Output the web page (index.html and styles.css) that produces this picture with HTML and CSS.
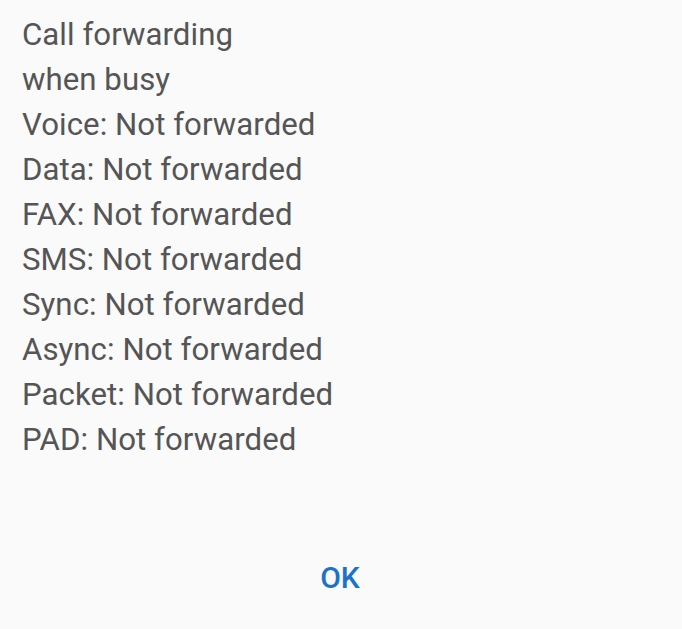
FILE: index.html
```html
<html lang="en">

<head>
    <meta charset="UTF-8">
    <meta name="viewport" content="width=device-width, initial-scale=1.0">
    <title>Call forwarding</title>

    <link rel="stylesheet" href="styles.css">
</head>

<body>

    <main class="dialog">
        <div class="message">
            <div>Call forwarding</div>
            <div>when busy</div>
            <div>Voice: Not forwarded</div>
            <div>Data: Not forwarded</div>
            <div>FAX: Not forwarded</div>
            <div>SMS: Not forwarded</div>
            <div>Sync: Not forwarded</div>
            <div>Async: Not forwarded</div>
            <div>Packet: Not forwarded</div>
            <div>PAD: Not forwarded</div>
        </div>
        <div class="actions">
            <button class="ok" type="button">OK</button>
        </div>
    </main>

</body>

</html>
```

FILE: styles.css
```css
*,
*::after {
    box-sizing: border-box;
    margin: 0;
    padding: 0;
}

html,
body {
    height: 100%;
}

body {
    background-color: #fafafa;
    font-family: Roboto, "Noto Sans", sans-serif;
}

.dialog {
    height: 100%;
    display: flex;
    flex-direction: column;
    justify-content: space-between;
}

.message {
    padding: 12px 23px 0 22px;
    font-size: 31.2px;
    letter-spacing: 0.05px;
    line-height: 45px;
    color: #555555;
}

.actions {
    display: flex;
    justify-content: center;
    padding-bottom: 26px;
}

.ok {
    border: none;
    background: none;
    font-family: inherit;
    font-size: 30px;
    font-weight: 500;
    color: #1a73c9;
    padding: 8px 16px 8px 14px;
}
```
